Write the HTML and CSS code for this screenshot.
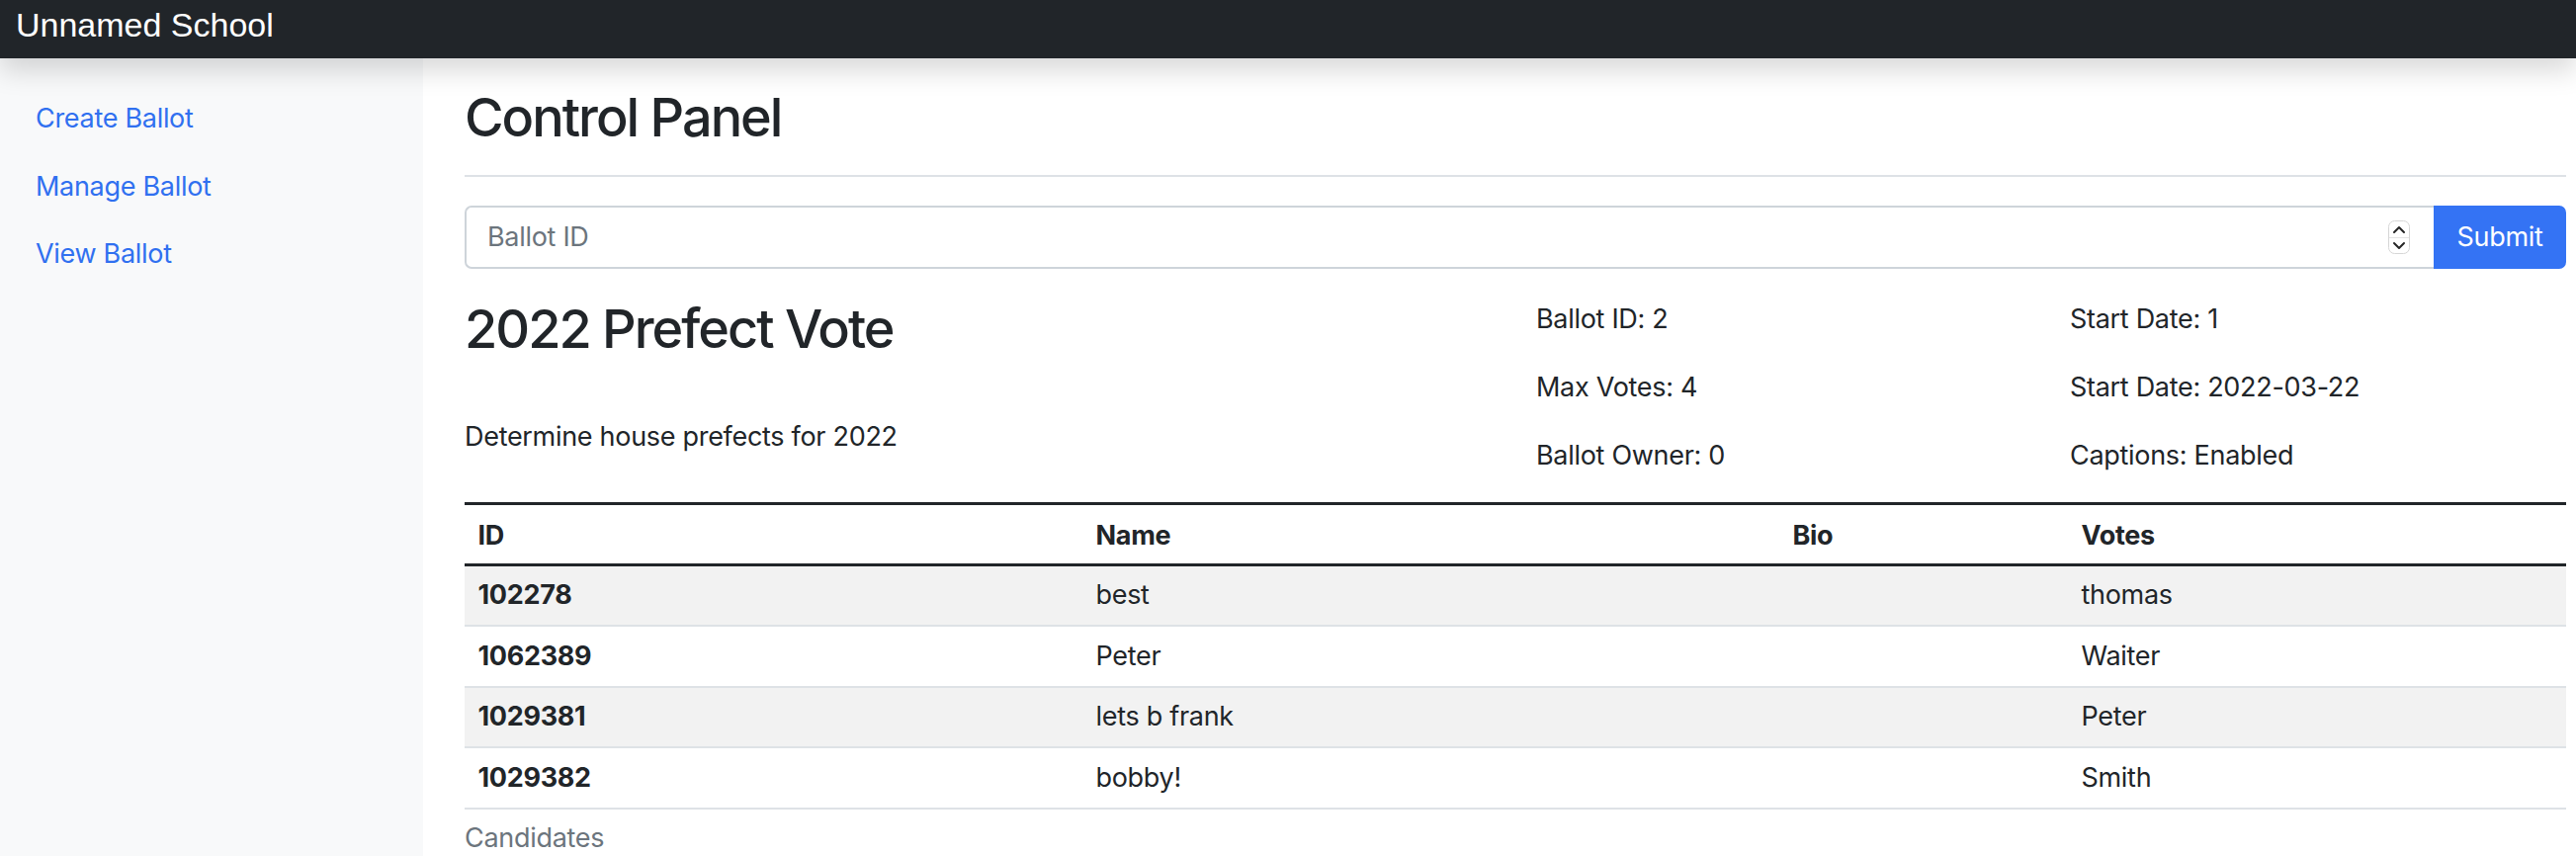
FILE: index.html
```html
<!DOCTYPE html>
<html lang="en">
<head>
<meta charset="utf-8">
<title>Control Panel</title>
<link rel="stylesheet" href="styles.css">
</head>
<body>
<header class="navbar">
  <a class="brand" href="#">Unnamed School</a>
</header>
<div class="layout">
  <nav class="sidebar">
    <ul class="nav-list">
      <li><a class="nav-link" href="#">Create Ballot</a></li>
      <li><a class="nav-link" href="#">Manage Ballot</a></li>
      <li><a class="nav-link" href="#">View Ballot</a></li>
    </ul>
  </nav>
  <main class="main">
    <div class="page-header">
      <h2 class="heading">Control Panel</h2>
    </div>
    <form class="search" onsubmit="return false">
      <div class="field">
        <input class="field-input" type="text" placeholder="Ballot ID">
        <svg class="spinner" width="22" height="34" viewBox="0 0 22 34" aria-hidden="true">
          <rect x="0.5" y="0.5" width="21" height="33" rx="6" fill="#fff" stroke="#d6d6d6"/>
          <line x1="1" y1="17.5" x2="21" y2="17.5" stroke="#e4e4e4"/>
          <path d="M6 12 L11 7 L16 12" fill="none" stroke="#262626" stroke-width="2" stroke-linecap="round" stroke-linejoin="round"/>
          <path d="M6 23 L11 28 L16 23" fill="none" stroke="#262626" stroke-width="2" stroke-linecap="round" stroke-linejoin="round"/>
        </svg>
      </div>
      <button class="btn" type="submit">Submit</button>
    </form>
    <section class="ballot-info">
      <div class="summary">
        <h2 class="heading ballot-title">2022 Prefect Vote</h2>
        <p class="description">Determine house prefects for 2022</p>
      </div>
      <div class="meta">
        <p>Ballot ID: 2</p>
        <p>Max Votes: 4</p>
        <p>Ballot Owner: 0</p>
      </div>
      <div class="meta">
        <p>Start Date: 1</p>
        <p>Start Date: 2022-03-22</p>
        <p>Captions: Enabled</p>
      </div>
    </section>
    <table class="table">
      <caption>Candidates</caption>
      <colgroup>
        <col class="col-id">
        <col class="col-name">
        <col class="col-bio">
        <col class="col-votes">
      </colgroup>
      <thead>
        <tr><th>ID</th><th>Name</th><th>Bio</th><th>Votes</th></tr>
      </thead>
      <tbody>
        <tr><th>102278</th><td>best</td><td></td><td>thomas</td></tr>
        <tr><th>1062389</th><td>Peter</td><td></td><td>Waiter</td></tr>
        <tr><th>1029381</th><td>lets b frank</td><td></td><td>Peter</td></tr>
        <tr><th>1029382</th><td>bobby!</td><td></td><td>Smith</td></tr>
      </tbody>
    </table>
  </main>
</div>
</body>
</html>
```
FILE: styles.css
```css
* { box-sizing: border-box; }

body {
  margin: 0;
  font-family: Inter, "Noto Sans", sans-serif;
  font-size: 27px;
  line-height: 1.5;
  letter-spacing: -0.3px;
  color: #212529;
  background: #fff;
}

.navbar {
  position: relative;
  z-index: 2;
  height: 59px;
  padding: 8px 16px 0;
  background: #212529;
  box-shadow: 0 13px 27px rgba(0, 0, 0, 0.15);
}

.brand {
  font-family: "Liberation Sans", Arial, sans-serif;
  font-size: 34px;
  line-height: 34px;
  letter-spacing: 0;
  color: #fff;
  text-decoration: none;
}

.layout {
  display: flex;
  min-height: calc(100vh - 59px);
}

.sidebar {
  flex: none;
  width: 428px;
  padding-top: 27px;
  background: #f8f9fa;
}

.nav-list {
  list-style: none;
  margin: 0;
  padding: 0;
}

.nav-link {
  display: block;
  padding: 14px 36px;
  color: #3070f0;
  text-decoration: none;
}

.main {
  flex: 1;
  min-width: 0;
  padding: 0 10px 0 42px;
}

.page-header {
  padding: 27px 0 25px;
  border-bottom: 2px solid #dee2e6;
  margin-bottom: 29px;
}

.heading {
  margin: 0;
  font-size: 54px;
  font-weight: 500;
  line-height: 66px;
  letter-spacing: -2px;
}

.search {
  display: flex;
  height: 64px;
  margin: 0;
}

.field {
  flex: 1;
  display: flex;
  align-items: center;
  padding: 0 24px 0 21px;
  border: 2px solid #ced4da;
  border-right: 0;
  border-radius: 7px 0 0 7px;
  background: #fff;
}

.field-input {
  flex: 1;
  min-width: 0;
  padding: 0;
  border: 0;
  outline: 0;
  font: inherit;
  letter-spacing: inherit;
  color: #212529;
  background: transparent;
}

.field-input::placeholder {
  color: #6c757d;
  opacity: 1;
}

.spinner {
  flex: none;
  display: block;
}

.btn {
  flex: none;
  width: 134px;
  padding: 0;
  border: 0;
  border-radius: 0 7px 7px 0;
  background: #3473f4;
  color: #fff;
  font: inherit;
  letter-spacing: inherit;
  cursor: pointer;
}

.ballot-info {
  display: grid;
  grid-template-columns: 1084px 540px 1fr;
  margin-top: 28px;
}

.ballot-title {
  margin-bottom: 56px;
}

.description {
  margin: 0;
}

.meta {
  padding-top: 3px;
}

.meta p {
  margin: 0 0 28.5px;
}

.meta p:last-child {
  margin-bottom: 26.5px;
}

.table {
  width: 100%;
  table-layout: fixed;
  border-collapse: separate;
  border-spacing: 0;
}

.col-id { width: 625px; }
.col-name { width: 705px; }
.col-bio { width: 292px; }

.table th,
.table td {
  text-align: left;
  vertical-align: top;
}

.table thead th {
  padding: 10.7px 13.5px 7.8px;
  font-weight: 700;
  border-top: 3px solid #212529;
  border-bottom: 3px solid #212529;
}

.table tbody th,
.table tbody td {
  padding: 9.5px 13.5px;
  border-bottom: 2px solid #dee2e6;
}

.table tbody th {
  font-weight: 700;
}

.table tbody tr:nth-child(odd) > * {
  background: #f2f2f2;
}

.table caption {
  caption-side: bottom;
  text-align: left;
  padding-top: 9px;
  color: #6c757d;
}
```
